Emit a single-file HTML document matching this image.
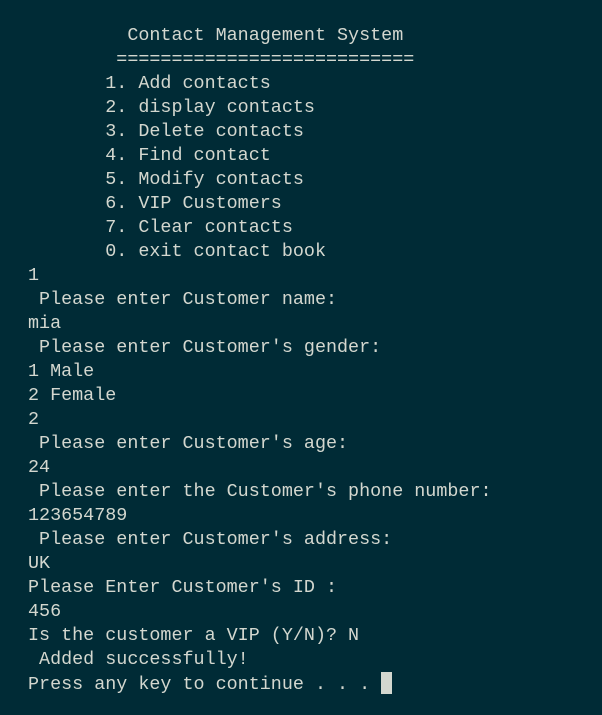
<!DOCTYPE html>
<html><head><style>
html,body{margin:0;padding:0;background:#002b36;width:602px;height:715px;overflow:hidden}
pre{margin:0;padding:24px 0 0 28px;font-family:"Liberation Mono",monospace;font-size:18.4px;line-height:24px;color:#d3d7cf}
.c{display:inline-block;width:11px;height:22px;background:#d3d7cf;vertical-align:-5px}
</style></head><body><pre>         Contact Management System
        ===========================
       1. Add contacts
       2. display contacts
       3. Delete contacts
       4. Find contact
       5. Modify contacts
       6. VIP Customers
       7. Clear contacts
       0. exit contact book
1
 Please enter Customer name:
mia
 Please enter Customer's gender:
1 Male
2 Female
2
 Please enter Customer's age:
24
 Please enter the Customer's phone number:
123654789
 Please enter Customer's address:
UK
Please Enter Customer's ID :
456
Is the customer a VIP (Y/N)? N
 Added successfully!
Press any key to continue . . . <span class="c"></span></pre></body></html>
